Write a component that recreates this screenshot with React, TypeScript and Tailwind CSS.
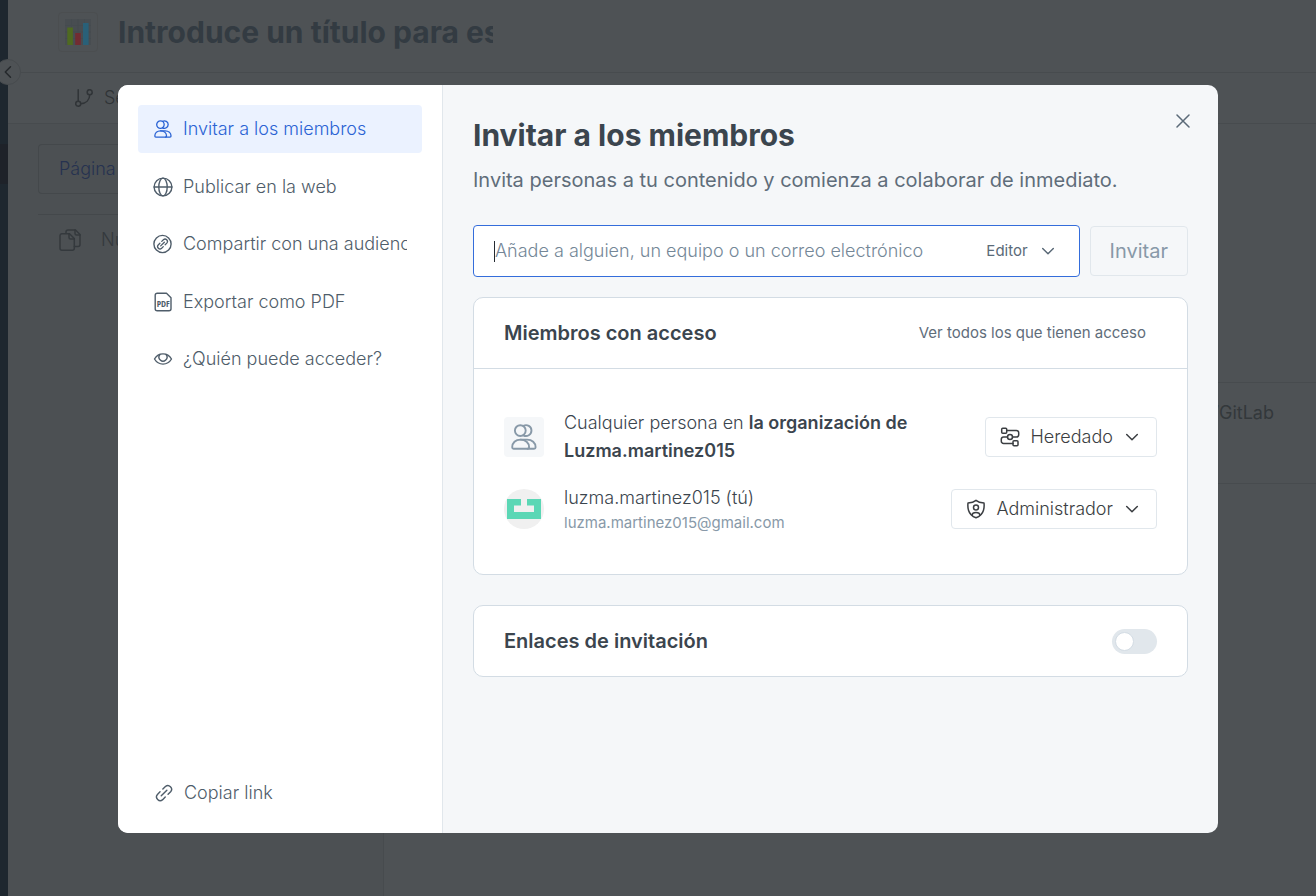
import type { ReactNode } from "react";

type IconProps = { className?: string };

function Svg({
  box = 24,
  stroke = 1.6,
  className = "",
  children,
}: {
  box?: number;
  stroke?: number;
  className?: string;
  children: ReactNode;
}) {
  return (
    <svg
      viewBox={`0 0 ${box} ${box}`}
      fill="none"
      stroke="currentColor"
      strokeWidth={stroke}
      strokeLinecap="round"
      strokeLinejoin="round"
      aria-hidden="true"
      className={`shrink-0 ${className}`}
    >
      {children}
    </svg>
  );
}

const MembersIcon = ({ className }: IconProps) => (
  <Svg box={26} stroke={1.9} className={className}>
    <circle cx="9.3" cy="6.6" r="5.4" />
    <path d="M12.4 1.9a5.4 5.4 0 1 1 0 9.4" />
    <path d="M1.2 23.2c0-4.4 3.3-7.6 8.3-7.6s8.6 3.2 8.6 7.6c0 .9-.6 1.5-1.5 1.5h-14c-.9 0-1.4-.6-1.4-1.5z" />
    <path d="M9.5 15.6h6.6c5 0 8.5 3.2 8.5 7.6 0 .9-.6 1.5-1.5 1.5h-6.5" />
  </Svg>
);

const GlobeIcon = ({ className }: IconProps) => (
  <Svg box={20} stroke={1.4} className={className}>
    <circle cx="10" cy="10" r="8.9" />
    <ellipse cx="10" cy="10" rx="4.2" ry="8.9" />
    <path d="M1.1 10h17.8" />
  </Svg>
);

const linkPaths = (
  <>
    <path d="M8.3 5.3l2.7-2.7a3.9 3.9 0 0 1 5.5 5.5l-2.7 2.7" />
    <path d="M10.8 13.8l-2.7 2.7a3.9 3.9 0 0 1-5.5-5.5l2.7-2.7" />
    <path d="M6.6 12.5l5.9-5.9" />
  </>
);

const LinkIcon = ({ className }: IconProps) => (
  <Svg box={19} stroke={1.5} className={className}>
    {linkPaths}
  </Svg>
);

const CircleLinkIcon = ({ className }: IconProps) => (
  <Svg box={20} stroke={1.4} className={className}>
    <circle cx="9.5" cy="10" r="8.6" />
    <g transform="translate(3.6 4.1) scale(0.62)" strokeWidth="2.1">
      {linkPaths}
    </g>
  </Svg>
);

const PdfIcon = ({ className }: IconProps) => (
  <Svg box={20} stroke={1.4} className={className}>
    <path d="M4.2 1.2h9.3l4.5 4.5v11.1a2 2 0 0 1-2 2H4.2a2 2 0 0 1-2-2V3.200a2 2 0 0 1 2-2z" />
    <text
      x="10.2"
      y="14.6"
      textAnchor="middle"
      fontSize="9"
      fontWeight="700"
      fontFamily="'Liberation Sans Narrow', 'Open Sans Condensed', 'Noto Sans', sans-serif"
      fill="currentColor"
      stroke="none"
    >
      PDF
    </text>
  </Svg>
);

const EyeIcon = ({ className }: IconProps) => (
  <Svg box={20} stroke={1.4} className={className}>
    <path d="M1.5 10C3.5 6.6 6.5 4.9 10 4.9S16.5 6.6 18.5 10C16.5 13.4 13.5 15.1 10 15.1S3.5 13.4 1.5 10z" />
    <path d="M6.9 5.5a4 4 0 1 0 6.2 0" />
  </Svg>
);

const ChevronIcon = ({ className }: IconProps) => (
  <Svg box={14} stroke={1.5} className={className}>
    <path d="M1.7 4.5L7 9.7l5.3-5.2" />
  </Svg>
);

const CloseIcon = ({ className }: IconProps) => (
  <Svg box={14} stroke={1.5} className={className}>
    <path d="M1 1l12 12M13 1L1 13" />
  </Svg>
);

const InheritIcon = ({ className }: IconProps) => (
  <Svg box={20} stroke={1.5} className={className}>
    <rect x="1.7" y="1.2" width="5" height="5" rx="1" />
    <rect x="13" y="13.8" width="5" height="5" rx="1" />
    <circle cx="10" cy="10" r="2.5" />
    <path d="M6.7 3.5h9.8a2.2 2.2 0 0 1 2.2 2.2v2.1a2.2 2.2 0 0 1-2.2 2.2h-4" />
    <path d="M7.5 10H3.5a2.2 2.2 0 0 0-2.2 2.2v2a2.2 2.2 0 0 0 2.2 2.2H13" />
  </Svg>
);

const ShieldIcon = ({ className }: IconProps) => (
  <Svg box={20} stroke={1.5} className={className}>
    <path d="M10 1.4c1.9 1.6 4.6 2.4 8 2.6.3 2.5.1 5.2-.6 7.5-1 3.4-3.8 6-7.4 7.3-3.6-1.3-6.4-3.9-7.4-7.3C1.9 9.2 1.7 6.5 2 4c3.4-.2 6.1-1 8-2.6z" />
    <circle cx="10" cy="8.5" r="2.5" />
    <path d="M6.3 16.3v-.5c0-1.6 1.5-2.4 3.7-2.4s3.7.8 3.7 2.4v.5" />
  </Svg>
);

const BranchIcon = ({ className }: IconProps) => (
  <Svg box={18} stroke={1.5} className={className}>
    <path d="M3.2.8v11.4" />
    <circle cx="3.2" cy="14.7" r="2.5" />
    <circle cx="14.7" cy="3.2" r="2.5" />
    <path d="M14.7 5.7c0 5-3.5 8.5-9 9" />
  </Svg>
);

const PagesIcon = ({ className }: IconProps) => (
  <Svg box={22} stroke={1.5} className={className}>
    <path d="M7 4.2V3a2 2 0 0 1 2-2h7.5L21 5.5v10a2 2 0 0 1-2 2h-3.6" />
    <path d="M16 1v3.5a1.5 1.5 0 0 0 1.5 1.5H21" />
    <path d="M3 4.7h7.5l4.8 4.8v9.7a2 2 0 0 1-2 2H3a2 2 0 0 1-2-2V6.7a2 2 0 0 1 2-2z" />
    <path d="M10 5v3.5A1.5 1.5 0 0 0 11.5 10H15" />
  </Svg>
);

function ChartEmoji() {
  return (
    <svg viewBox="0 0 26 26" className="size-[26px]" aria-hidden="true">
      <rect width="26" height="26" fill="#484d51" />
      <path d="M0 6.5h26M0 13h26M0 19.5h26M6.5 0v26M13 0v26M19.5 0v26" stroke="#454b4f" strokeWidth="1" />
      <rect x="2.3" y="8.5" width="5.6" height="17.5" fill="#4f6a20" />
      <rect x="10.200" y="14" width="5.600" height="12" fill="#722c32" />
      <rect x="18" y="4" width="5.600" height="22" fill="#296078" />
    </svg>
  );
}

function Backdrop() {
  return (
    <div className="flex min-h-screen bg-[#4e5255]">
      <div className="flex w-2 shrink-0 flex-col bg-[#1e272f]">
        <div className="mt-36 h-10 bg-[#1e2229]" />
      </div>
      <div className="relative flex min-w-0 flex-1 flex-col">
        <header className="flex h-[73px] items-center border-b border-[#474b4e] pb-2 pl-[50px]">
          <div className="flex size-10 shrink-0 items-center justify-center rounded border border-[#4b4e50]">
            <ChartEmoji />
          </div>
          <p className="ml-5 w-[375px] overflow-hidden text-3xl font-bold whitespace-nowrap text-[#333b42]">
            Introduce un título para este
          </p>
        </header>
        <button
          type="button"
          aria-label="Contraer"
          className="absolute top-[59px] -left-[13px] flex size-[26px] items-center justify-center rounded-full border border-[#474b4e] bg-[#4e5255] text-[#25292c]"
        >
          <ChevronIcon className="size-[14px] rotate-90" />
        </button>
        <div className="flex h-[51px] shrink-0 items-center gap-[11px] border-b border-[#474b4e] pl-[67px] text-lg font-light text-[#303437]">
          <BranchIcon className="size-[18px]" />
          Se
        </div>
        <div className="flex flex-1">
          <aside className="w-94 shrink-0 border-r border-[#474b4e] bg-[#4c5053] pt-5 pl-[30px]">
            <div className="flex h-[50px] items-center rounded-l-sm border border-r-0 border-[#44484b] pl-5 text-lg font-light text-[#263250]">
              Página
            </div>
            <div className="mt-5 flex items-center gap-5 border-t border-[#44484b] pt-[11px] pl-[21px] text-lg font-light text-[#34393d]">
              <PagesIcon className="size-[22px]" />
              Nu
            </div>
          </aside>
          <section className="flex-1 pt-[258px]">
            <div className="border-y border-[#474b4e] pt-4 pr-[42px] pb-14 text-right text-lg text-[#33383b]">
              GitHub/GitLab
            </div>
          </section>
        </div>
      </div>
    </div>
  );
}

const navItems = [
  { label: "Invitar a los miembros", Icon: MembersIcon, active: true },
  { label: "Publicar en la web", Icon: GlobeIcon, active: false },
  { label: "Compartir con una audiencia", Icon: CircleLinkIcon, active: false },
  { label: "Exportar como PDF", Icon: PdfIcon, active: false },
  { label: "¿Quién puede acceder?", Icon: EyeIcon, active: false },
];

function Sidebar() {
  return (
    <nav className="flex w-[325px] shrink-0 flex-col justify-between border-r border-[#e1e7ec] bg-white p-5 text-lg font-light text-[#4f5d6a]">
      <ul className="flex h-[278px] flex-col justify-between">
        {navItems.map(({ label, Icon, active }) => (
          <li key={label}>
            <button
              type="button"
              className={`flex h-12 w-full items-center gap-[10px] rounded px-[15px] text-left ${
                active ? "bg-[#ebf2ff] text-[#2a63d4]" : ""
              }`}
            >
              <Icon className={active ? "size-5 p-px" : "size-5"} />
              <span className="min-w-0 overflow-hidden whitespace-nowrap">{label}</span>
            </button>
          </li>
        ))}
      </ul>
      <button type="button" className="flex h-10 items-center gap-[10px] px-4 text-left">
        <LinkIcon className="size-5 p-px" />
        Copiar link
      </button>
    </nav>
  );
}

function RoleSelect({ id, label, value, icon }: { id: string; label: string; value: string; icon: ReactNode }) {
  return (
    <label
      htmlFor={id}
      className="flex h-10 shrink-0 items-center rounded border border-[#e1e7ec] pr-[17px] pl-[14px] text-lg font-light text-[#3b3e42]"
    >
      {icon}
      <span className="sr-only">{label}</span>
      <select id={id} className="ml-[10px] field-sizing-content appearance-none bg-transparent outline-none">
        <option>{value}</option>
      </select>
      <ChevronIcon className="ml-3 size-[14px]" />
    </label>
  );
}

export default function App() {
  return (
    <div className="relative min-h-screen font-[Inter,sans-serif]">
      <Backdrop />
      <div className="absolute inset-0 flex pt-[85px] pr-[98px] pb-[63px] pl-[118px]">
        <div role="dialog" aria-labelledby="dialog-title" className="flex flex-1 overflow-hidden rounded-[10px] bg-[#f5f7f9]">
          <Sidebar />
          <main className="min-w-0 flex-1 px-[30px] pt-8 text-[#3b454e]">
            <div className="flex items-start justify-between">
              <h1 id="dialog-title" className="text-3xl font-bold">
                Invitar a los miembros
              </h1>
              <button type="button" aria-label="Cerrar" className="-mt-3 -mr-[11px] p-1 text-[#5b6a78]">
                <CloseIcon className="size-6 p-[5px]" />
              </button>
            </div>
            <p className="mt-[13px] text-xl text-[#5f6d7a]">
              Invita personas a tu contenido y comienza a colaborar de inmediato.
            </p>

            <form className="mt-[31px] flex items-center gap-[10px]">
              <div className="flex h-[52px] min-w-0 flex-1 items-center rounded border border-[#346ddb] bg-white pr-6 pl-5">
                <span className="h-[21px] w-px bg-[#242a31]" />
                <input
                  type="text"
                  aria-label="Añade a alguien, un equipo o un correo electrónico"
                  placeholder="Añade a alguien, un equipo o un correo electrónico"
                  className="min-w-0 flex-1 text-lg font-light caret-transparent outline-none placeholder:text-[#748797]"
                />
                <label htmlFor="invite-role" className="flex items-center text-[15px] text-[#5b6a78]">
                  <span className="sr-only">Rol</span>
                  <select id="invite-role" className="field-sizing-content appearance-none bg-transparent outline-none">
                    <option>Editor</option>
                  </select>
                  <ChevronIcon className="ml-[13px] size-[14px]" />
                </label>
              </div>
              <button
                type="button"
                disabled
                className="h-[50px] rounded border border-[#e1e7ec] bg-[#f5f7f9] px-[19px] text-xl text-[#8899a8]"
              >
                Invitar
              </button>
            </form>

            <section className="mt-5 rounded-[10px] border border-[#d3dce4] bg-white">
              <div className="flex h-[71px] items-center justify-between border-b border-[#d3dce4] pr-[41px] pl-[30px]">
                <h2 className="text-xl font-semibold">Miembros con acceso</h2>
                <a href="#acceso" className="text-[15px] text-[#5f6d7a]">
                  Ver todos los que tienen acceso
                </a>
              </div>
              <ul className="flex flex-col gap-[19px] px-[30px] py-10">
                <li className="flex items-center">
                  <span className="flex size-10 shrink-0 items-center justify-center rounded bg-[#f5f7f9] text-[#8899a8]">
                    <MembersIcon className="size-[26px]" />
                  </span>
                  <p className="ml-5 min-w-0 flex-1 pr-14 text-lg leading-7 font-light">
                    Cualquier persona en{" "}
                    <strong className="font-semibold">la organización de Luzma.martinez015</strong>
                  </p>
                  <RoleSelect
                    id="org-role"
                    label="Rol de la organización"
                    value="Heredado"
                    icon={<InheritIcon className="size-5" />}
                  />
                </li>
                <li className="flex items-center">
                  <svg viewBox="0 0 40 40" className="size-10 shrink-0" aria-hidden="true">
                    <circle cx="20" cy="20" r="20" fill="#f0f0f0" />
                    <path d="M3 10h14v6.500h-7V23h20v-6.500h-7V10h14v20H3z" fill="#5bd7b5" />
                  </svg>
                  <div className="ml-5 min-w-0 flex-1">
                    <p className="text-lg leading-7 font-light">luzma.martinez015 (tú)</p>
                    <p className="text-[15px] leading-[22px] text-[#8899a8]">luzma.martinez015@gmail.com</p>
                  </div>
                  <RoleSelect
                    id="user-role"
                    label="Rol de luzma.martinez015"
                    value="Administrador"
                    icon={<ShieldIcon className="size-5" />}
                  />
                </li>
              </ul>
            </section>

            <section className="mt-[30px] flex h-[72px] items-center justify-between rounded-[10px] border border-[#d3dce4] bg-white px-[30px]">
              <h2 className="text-xl font-semibold">Enlaces de invitación</h2>
              <input
                type="checkbox"
                role="switch"
                aria-label="Enlaces de invitación"
                className="h-[25px] w-[45px] appearance-none rounded-full bg-[#e1e7ec] p-[3px] before:block before:size-[19px] before:rounded-full before:border before:border-[#d3dce4] before:bg-white checked:bg-[#346ddb] checked:before:ml-5"
              />
            </section>
          </main>
        </div>
      </div>
    </div>
  );
}
